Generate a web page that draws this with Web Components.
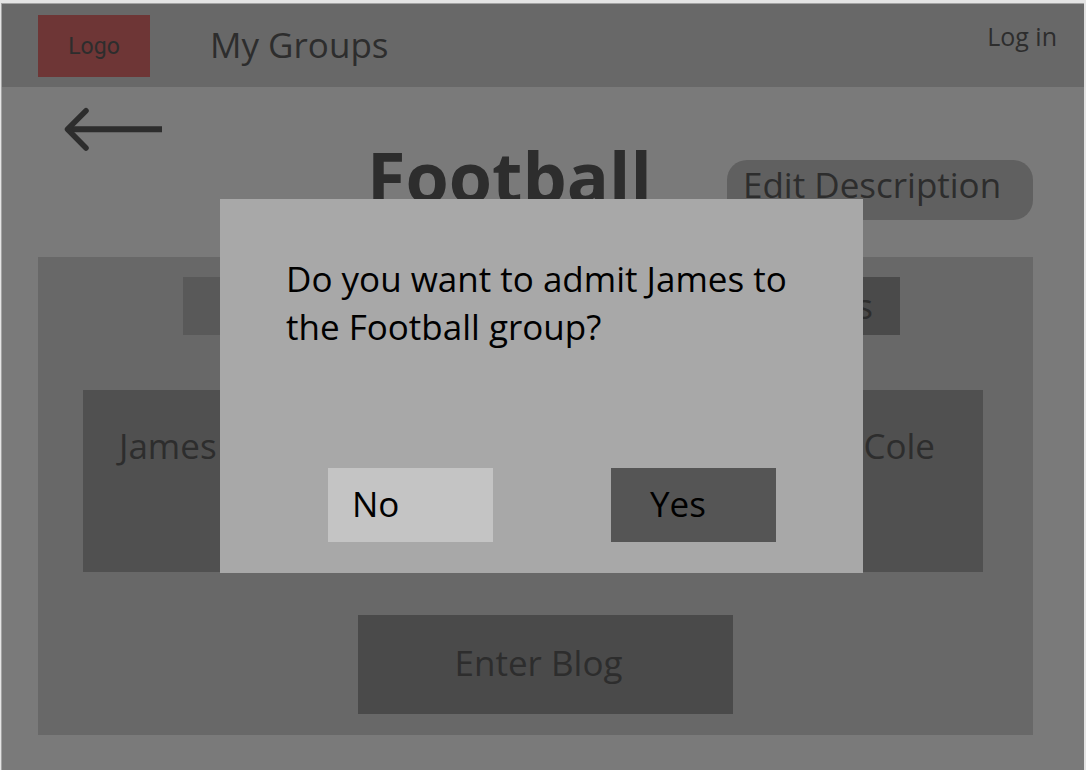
<!DOCTYPE html>
<html lang="en">
<head>
<meta charset="utf-8">
<title>Football group</title>
<style>
  body { margin: 0; background: #e4e4e4; color: #2d2d2d; font: 35px/48px "Open Sans", sans-serif; }
</style>
</head>
<body>
<group-app></group-app>

<template id="group-app">
  <style>
    :host { display: flex; flex-direction: column; box-sizing: border-box; min-height: 100vh; padding: 3px 2px 0 1px; }
    .page { flex: 1; border: solid #a3a3a3; border-width: 1px 0 0 1px; background: #7a7a7a; }
    main { padding: 19px 51px 35px 36px; }
    .hero { display: grid; grid-template-columns: 329px 1fr 306px; align-items: start; margin-bottom: 37px; }
    h1 { margin: 34px 0 0; font-size: 70px; line-height: 72px; font-weight: 700; height: 80px; }
    .edit { margin-top: 54px; height: 60px; border: 0; border-radius: 20px; background: #606060; color: inherit; font: inherit; text-align: left; padding: 0 0 10px 16px; white-space: nowrap; }
  </style>
  <div class="page">
    <site-header></site-header>
    <main>
      <div class="hero">
        <back-link></back-link>
        <h1>Football</h1>
        <button class="edit" type="button">Edit Description</button>
      </div>
      <group-panel>
        <person-card slot="people">James</person-card>
        <person-card slot="people" class="end">Cole</person-card>
      </group-panel>
    </main>
  </div>
  <confirm-dialog>Do you want to admit James to the Football group?</confirm-dialog>
</template>

<template id="site-header">
  <style>
    :host { display: block; }
    header { display: flex; align-items: flex-start; padding: 11px 27px 10px 36px; background: #686868; }
    a { color: inherit; text-decoration: none; }
    .logo { width: 112px; height: 62px; background: #6e3636; font: 23px/64px Roboto, sans-serif; text-align: center; }
    .groups { margin-left: 60px; line-height: 60px; }
    .login { margin-left: auto; font-size: 25px; line-height: 42px; }
  </style>
  <header>
    <a class="logo" href="#home">Logo</a>
    <a class="groups" href="#groups">My Groups</a>
    <a class="login" href="#login">Log in</a>
  </header>
</template>

<template id="back-link">
  <style>
    :host { display: block; padding-left: 26px; }
    a { display: inline-block; color: inherit; }
    svg { display: block; }
  </style>
  <a href="#back" aria-label="Back">
    <svg width="98" height="46" viewBox="0 0 98 46" fill="none" stroke="currentColor" stroke-width="6">
      <path d="M4 23.200H98"/>
      <path d="M22 4.700L3.500 23.200L22 42" stroke-width="5.500" stroke-linecap="round" stroke-linejoin="round"/>
    </svg>
  </a>
</template>

<template id="group-panel">
  <style>
    :host { display: flex; flex-direction: column; background: #686868; padding: 20px 50px 21px 45px; }
    .tabs { display: flex; gap: 20px; margin: 0 83px 55px 100px; }
    button { border: 0; color: inherit; font: inherit; }
    .tabs button { flex: 1; height: 58px; padding: 0 27px; background: #595959; text-align: right; }
    .tabs button + button { background: #4a4a4a; }
    .people { display: grid; grid-template-columns: 1fr 1fr; gap: 40px; margin-bottom: 43px; }
    .blog { width: 375px; height: 99px; margin-left: 275px; padding: 0 14px 4px 0; background: #4a4a4a; }
  </style>
  <div class="tabs">
    <button type="button" aria-label="First tab"></button>
    <button type="button">s</button>
  </div>
  <div class="people"><slot name="people"></slot></div>
  <button class="blog" type="button">Enter Blog</button>
</template>

<template id="person-card">
  <style>
    :host { display: block; box-sizing: border-box; height: 182px; padding: 32px 48px 0 36px; background: #505050; }
    :host(.end) { text-align: right; }
  </style>
  <slot></slot>
</template>

<template id="confirm-dialog">
  <style>
    :host { position: fixed; inset: 2px 3px 0 0; display: flex; align-items: center; justify-content: center; color: #000; }
    section { display: flex; flex-direction: column; box-sizing: border-box; width: 90%; max-width: 643px; min-height: 374px; padding: 56px 66px 31px; background: #a8a8a8; }
    p { margin: 0; }
    .actions { display: flex; justify-content: space-between; margin: auto 21px 0 42px; }
    button { width: 165px; height: 74px; border: 0; padding: 0 0 2px 24px; background: #c4c4c4; color: inherit; font: inherit; text-align: left; }
    .yes { padding-left: 39px; background: #555; }
  </style>
  <section role="dialog" aria-modal="true" aria-labelledby="question">
    <p id="question"><slot></slot></p>
    <div class="actions">
      <button type="button">No</button>
      <button class="yes" type="button">Yes</button>
    </div>
  </section>
</template>

<script>
  for (const name of ["site-header", "back-link", "person-card", "group-panel", "confirm-dialog", "group-app"]) {
    customElements.define(name, class extends HTMLElement {
      constructor() {
        super();
        this.attachShadow({ mode: "open" }).append(document.getElementById(name).content.cloneNode(true));
      }
    });
  }
</script>
</body>
</html>
